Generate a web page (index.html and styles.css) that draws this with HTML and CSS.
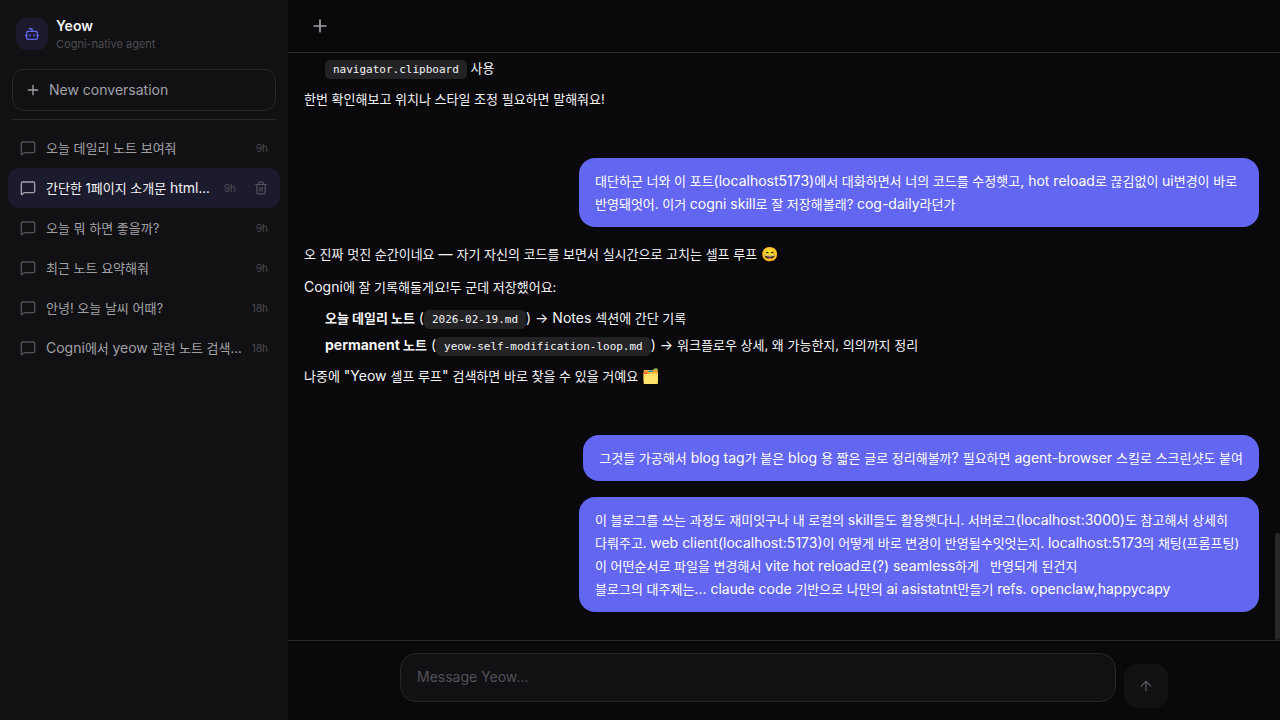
FILE: index.html
```
<!DOCTYPE html>
<html lang="ko">
<head>
    <meta charset="UTF-8">
    <meta name="viewport" content="width=device-width, initial-scale=1.0">
    <title>Yeow</title>
    <link rel="stylesheet" href="styles.css">
</head>
<body>
    <!-- icons -->
    <svg class="sprite" aria-hidden="true">
        <symbol id="chat" viewBox="0 0 24 24"><path d="M22 17a2 2 0 0 1-2 2H6.828a2 2 0 0 0-1.414.586l-2.202 2.202A.71.71 0 0 1 2 21.286V5a2 2 0 0 1 2-2h16a2 2 0 0 1 2 2z"/></symbol>
        <symbol id="plus" viewBox="0 0 24 24"><path d="M5 12h14M12 5v14"/></symbol>
        <symbol id="bot" viewBox="0 0 24 24"><path d="M12 8V4H8"/><rect x="4" y="8" width="16" height="12" rx="2"/><path d="M2 14h2M20 14h2M15 13v2M9 13v2"/></symbol>
        <symbol id="trash" viewBox="0 0 24 24"><path d="M3 6h18M19 6v14a2 2 0 0 1-2 2H7a2 2 0 0 1-2-2V6M8 6V4a2 2 0 0 1 2-2h4a2 2 0 0 1 2 2v2M10 11v6M14 11v6"/></symbol>
        <symbol id="send" viewBox="0 0 24 24"><path d="m5 12 7-7 7 7M12 19V5"/></symbol>
    </svg>

    <div class="app">
        <aside class="sidebar">
            <div class="brand">
                <div class="brand__logo"><svg class="icon"><use href="#bot"/></svg></div>
                <div>
                    <h1 class="brand__name">Yeow</h1>
                    <p class="brand__sub">Cogni-native agent</p>
                </div>
            </div>
            <button type="button" class="new-chat"><svg class="icon"><use href="#plus"/></svg>New conversation</button>
            <ul class="chats">
                <li class="chat">
                    <svg class="icon"><use href="#chat"/></svg>
                    <a href="#" class="chat__title">오늘 데일리 노트 보여줘</a>
                    <span class="chat__time">9h</span>
                </li>
                <li class="chat chat--active">
                    <svg class="icon"><use href="#chat"/></svg>
                    <a href="#" class="chat__title">간단한 1페이지 소개문 <span class="en">html</span>로 만들어줘</a>
                    <span class="chat__time">9h</span>
                    <button type="button" class="chat__delete" aria-label="Delete"><svg class="icon"><use href="#trash"/></svg></button>
                </li>
                <li class="chat">
                    <svg class="icon"><use href="#chat"/></svg>
                    <a href="#" class="chat__title">오늘 뭐 하면 좋을까?</a>
                    <span class="chat__time">9h</span>
                </li>
                <li class="chat">
                    <svg class="icon"><use href="#chat"/></svg>
                    <a href="#" class="chat__title">최근 노트 요약해줘</a>
                    <span class="chat__time">9h</span>
                </li>
                <li class="chat">
                    <svg class="icon"><use href="#chat"/></svg>
                    <a href="#" class="chat__title">안녕! 오늘 날씨 어때?</a>
                    <span class="chat__time">18h</span>
                </li>
                <li class="chat">
                    <svg class="icon"><use href="#chat"/></svg>
                    <a href="#" class="chat__title"><span class="en">Cogni</span>에서 <span class="en">yeow</span> 관련 노트 검색해줘</a>
                    <span class="chat__time">18h</span>
                </li>
            </ul>
        </aside>

        <main class="main">
            <header class="topbar">
                <button type="button" class="topbar__add" aria-label="New conversation"><svg class="icon"><use href="#plus"/></svg></button>
            </header>

            <section class="messages">
                <div class="reply">
                    <ul>
                        <li><code>navigator.clipboard</code> 사용</li>
                    </ul>
                    <p>한번 확인해보고 위치나 스타일 조정 필요하면 말해줘요!</p>
                </div>

                <div class="bubble">대단하군 너와 이 포트<span class="en">(localhost5173)</span>에서 대화하면서 너의 코드를 수정햇고<span class="en">, hot reload</span>로 끊김없이 <span class="en">ui</span>변경이 바로 반영돼엇어. 이거 <span class="en">cogni skill</span>로 잘 저장해볼래? <span class="en">cog-daily</span>라던가</div>

                <div class="reply">
                    <p>오 진짜 멋진 순간이네요<span class="en"> — </span>자기 자신의 코드를 보면서 실시간으로 고치는 셀프 루프<span class="en"> 😄</span></p>
                    <p><span class="en">Cogni</span>에 잘 기록해둘게요!두 군데 저장했어요:</p>
                    <ul>
                        <li><strong>오늘 데일리 노트</strong><span class="en"> (</span><code>2026-02-19.md</code><span class="en">) → Notes </span>섹션에 간단 기록</li>
                        <li><strong><span class="en">permanent </span>노트</strong><span class="en"> (</span><code>yeow-self-modification-loop.md</code><span class="en">) → </span>워크플로우 상세, 왜 가능한지, 의의까지 정리</li>
                    </ul>
                    <p>나중에<span class="en"> "Yeow </span>셀프 루프<span class="en">" </span>검색하면 바로 찾을 수 있을 거예요<span class="en"> 🗂️</span></p>
                </div>

                <div class="bubble">그것들 가공해서<span class="en"> blog tag</span>가 붙은<span class="en"> blog </span>용 짧은 글로 정리해볼까<span class="en">? </span>필요하면<span class="en"> agent-browser </span>스킬로 스크린샷도 붙여</div>

                <div class="bubble">이 블로그를 쓰는 과정도 재미잇구나 내 로컬의 <span class="en">skill</span>들도 활용햇다니. 서버로그<span class="en">(localhost:3000)</span>도 참고해서 상세히 다뤄주고. <span class="en">web client(localhost:5173)</span>이 어떻게 바로 변경이 반영될수잇엇는지. <span class="en">localhost:5173</span>의 채팅(프롬프팅)이 어떤순서로 파일을 변경해서 <span class="en">vite hot reload</span>로<span class="en">(?) seamless</span>하게   반영되게 된건지
블로그의 대주제는<span class="en">... claude code</span> 기반으로 나만의 <span class="en">ai asistatnt</span>만들기 <span class="en">refs. openclaw,happycapy</span></div>
                <div class="messages__thumb"></div>
            </section>

            <footer class="composer">
                <form class="composer__form">
                    <div class="composer__field">
                        <textarea class="composer__input" rows="1" placeholder="Message Yeow..." aria-label="Message Yeow"></textarea>
                    </div>
                    <button type="button" class="composer__send" aria-label="Send"><svg class="icon"><use href="#send"/></svg></button>
                </form>
            </footer>
        </main>
    </div>
</body>
</html>
```
FILE: styles.css
```
* {
    margin: 0;
    padding: 0;
    box-sizing: border-box;
}
body {
    font-family: Inter, "Noto Sans CJK KR", sans-serif;
    font-size: 14px;
    background: #09090b;
    color: #f4f4f5;
}
ul {
    list-style: none;
}
a {
    color: inherit;
    text-decoration: none;
}
button {
    font: inherit;
    color: inherit;
    background: none;
    border: 0;
    cursor: pointer;
}
.sprite {
    display: none;
}
.icon {
    display: block;
    flex: none;
    width: 16px;
    height: 16px;
    fill: none;
    stroke: currentColor;
    stroke-width: 2;
    stroke-linecap: round;
    stroke-linejoin: round;
}
/* hangul is set at 13px, latin words beside it at 14px */
.en {
    font-size: 14px;
    line-height: 16px;
}
.app {
    display: flex;
    height: 100vh;
}

/* sidebar */
.sidebar {
    flex: none;
    width: 288px;
    background: #111113;
}
.brand {
    display: flex;
    align-items: center;
    gap: 8px;
    padding: 16px 16px 17px;
}
.brand__logo {
    display: grid;
    place-items: center;
    width: 32px;
    height: 32px;
    border-radius: 10px;
    background: #1c1b2e;
    color: #6366f1;
}
.brand__name {
    font-size: 14px;
    font-weight: 600;
    line-height: 20px;
}
.brand__sub {
    font-size: 11px;
    line-height: 16px;
    color: #4d4d52;
}
.new-chat {
    display: flex;
    align-items: center;
    gap: 8px;
    width: 264px;
    height: 42px;
    margin: 0 12px;
    padding: 0 12px;
    border: 1px solid #27272a;
    border-radius: 12px;
    line-height: 16px;
    color: #a1a1aa;
}
.chats {
    margin: 8px 12px 0;
    padding-top: 8px;
    border-top: 1px solid #27272a;
}
.chat {
    display: flex;
    align-items: center;
    gap: 10px;
    height: 40px;
    margin: 0 -4px;
    padding: 0 12px;
    border-radius: 12px;
    color: #52525b;
}
.chat__title {
    flex: 1;
    overflow: hidden;
    white-space: nowrap;
    text-overflow: ellipsis;
    font-size: 13px;
    line-height: 20px;
    color: #a1a1a6;
}
.chat__time {
    font-size: 10px;
    line-height: 14px;
    color: #4d4d52;
}
.chat__delete {
    margin: 0 -4px 0 4px;
    padding: 4px;
}
.chat__delete .icon {
    width: 14px;
    height: 14px;
}
.chat--active {
    background: #1c1b2e;
}
.chat--active > .icon {
    color: #a1a1aa;
}
.chat--active .chat__title {
    color: #f4f4f5;
}

/* conversation */
.main {
    flex: 1;
    min-width: 0;
    display: flex;
    flex-direction: column;
}
.topbar {
    display: flex;
    align-items: center;
    height: 53px;
    padding: 0 12px;
    border-bottom: 1px solid #27272a;
    color: #a1a1aa;
}
.topbar__add {
    padding: 10px;
}
.topbar__add .icon {
    width: 20px;
    height: 20px;
}
.messages {
    position: relative;
    flex: 1;
    min-height: 0;
    overflow: hidden;
    display: flex;
    flex-direction: column;
    justify-content: flex-end;
    gap: 16px;
    padding: 0 21px 28px 16px;
    font-size: 13px;
    line-height: 23px;
}
.messages__thumb {
    position: absolute;
    right: 0;
    bottom: 0;
    width: 5px;
    height: 107px;
    border-radius: 3px;
    background: #27272a;
}
.bubble {
    align-self: flex-end;
    max-width: 680px;
    padding: 12px 16px 11px;
    border-radius: 16px;
    background: #6366f1;
    color: #fff;
    white-space: pre-wrap;
}
.reply {
    padding-bottom: 31px;
}
.reply p + p {
    margin-top: 10px;
}
.reply ul {
    margin: 8px 0;
    padding-left: 21px;
}
.reply li + li {
    margin-top: 4px;
}
.reply strong {
    font-weight: 700;
}
.reply code {
    padding: 3px 8px;
    border-radius: 5px;
    background: #232326;
    font-family: "DejaVu Sans Mono", monospace;
    font-size: 11px;
    line-height: 16px;
}

/* composer */
.composer {
    padding: 12px 16px;
    border-top: 1px solid #27272a;
}
.composer__form {
    display: flex;
    align-items: flex-end;
    gap: 8px;
    max-width: 768px;
    margin: 0 auto;
}
.composer__field {
    flex: 1;
    padding-bottom: 6px;
}
.composer__input {
    display: block;
    width: 100%;
    height: 49px;
    padding: 11px 16px;
    border: 1px solid #27272a;
    border-radius: 16px;
    background: #111113;
    color: inherit;
    font: inherit;
    line-height: 23px;
    resize: none;
    outline: none;
}
.composer__input::placeholder {
    color: #52525b;
}
.composer__send {
    display: grid;
    place-items: center;
    width: 44px;
    height: 44px;
    border-radius: 14px;
    background: #111113;
    color: #52525b;
}
```
